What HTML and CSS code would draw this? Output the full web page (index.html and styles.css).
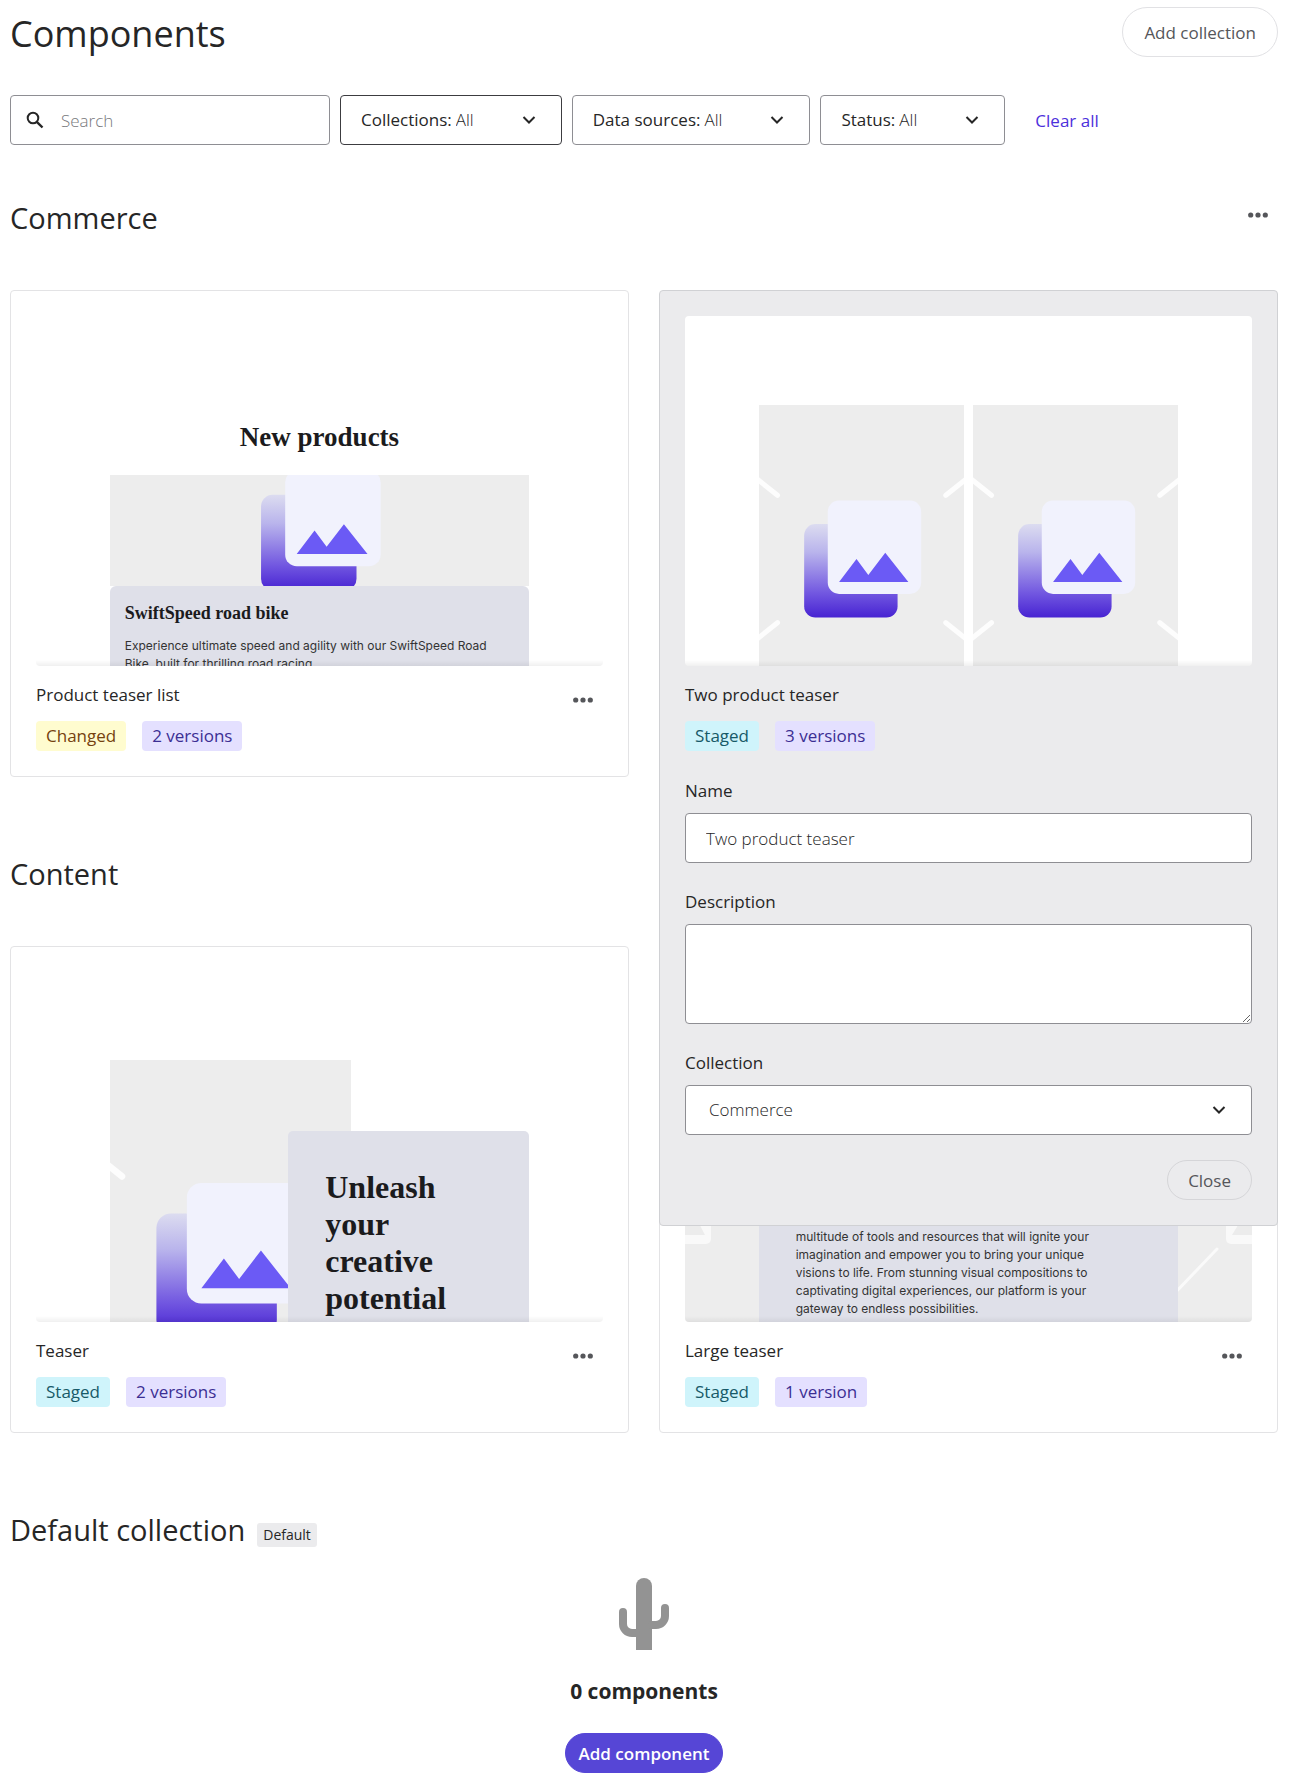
FILE: index.html
```html
<!DOCTYPE html>
<html lang="en">
<head>
<meta charset="utf-8">
<meta name="viewport" content="width=device-width, initial-scale=1">
<title>Components</title>
<link rel="stylesheet" href="styles.css">
</head>
<body>
<svg class="defs" width="0" height="0" aria-hidden="true">
  <defs>
    <linearGradient id="fade" x1="0" y1="0" x2="0" y2="1">
      <stop offset="0" stop-color="#dcdcf0"/>
      <stop offset="0.3" stop-color="#b9b4ec"/>
      <stop offset="0.75" stop-color="#7055e0"/>
      <stop offset="1" stop-color="#4723d2"/>
    </linearGradient>
    <symbol id="picture" viewBox="0 0 400 300" preserveAspectRatio="xMidYMid slice">
      <rect width="400" height="300" fill="#ededed"/>
      <g stroke="#fff" stroke-opacity="0.85" stroke-width="5" stroke-linecap="round">
        <path d="M118 88 98 72M282 88l20-16M118 212l-20 16M282 212l20 16"/>
      </g>
      <rect x="144" y="116" width="91" height="91" rx="11" fill="url(#fade)"/>
      <rect x="167" y="93" width="91" height="91" rx="11" fill="#f1f2fd"/>
      <path d="M178 172.500 195 150l11.500 15.500L223 144l22.500 28.500z" fill="#6b5af5"/>
    </symbol>
    <symbol id="chevron" viewBox="0 0 14 10">
      <path d="M1.500 2 7 7.500 12.500 2" fill="none" stroke="#262626" stroke-width="2"/>
    </symbol>
    <symbol id="dots" viewBox="0 0 20 6">
      <g fill="#55565a"><circle cx="2.700" cy="3" r="2.600"/><circle cx="10" cy="3" r="2.600"/><circle cx="17.300" cy="3" r="2.600"/></g>
    </symbol>
  </defs>
</svg>

<main class="page">
  <header class="page-head">
    <h1 class="page-title">Components</h1>
    <button type="button" class="btn btn-large">Add collection</button>
  </header>

  <form class="filters">
    <label class="search">
      <svg class="search-icon" viewBox="0 0 18 18" width="18" height="18" aria-hidden="true"><circle cx="7" cy="7" r="5.300" fill="none" stroke="#262626" stroke-width="2"/><path d="m10.800 10.800 5.700 5.700" stroke="#262626" stroke-width="2.400"/></svg>
      <input class="search-input" type="search" placeholder="Search" aria-label="Search">
    </label>
    <label class="filter filter-active"><span>Collections:</span>
      <select class="filter-select"><option>All</option></select>
      <svg class="chevron" aria-hidden="true"><use href="#chevron"/></svg>
    </label>
    <label class="filter"><span>Data sources:</span>
      <select class="filter-select"><option>All</option></select>
      <svg class="chevron" aria-hidden="true"><use href="#chevron"/></svg>
    </label>
    <label class="filter"><span>Status:</span>
      <select class="filter-select"><option>All</option></select>
      <svg class="chevron" aria-hidden="true"><use href="#chevron"/></svg>
    </label>
    <a class="clear" href="#">Clear all</a>
  </form>

  <div class="collections">
    <section>
      <div class="section-head">
        <h2 class="section-title">Commerce</h2>
        <button type="button" class="menu" aria-label="Commerce actions"><svg class="dots"><use href="#dots"/></svg></button>
      </div>
      <div class="cards">
        <article class="card">
          <div class="preview">
            <div class="stage product-list">
              <p class="display product-list-title">New products</p>
              <svg class="banner" aria-hidden="true"><use href="#picture"/></svg>
              <div class="product">
                <p class="display product-name">SwiftSpeed road bike</p>
                <p class="copy">Experience ultimate speed and agility with our SwiftSpeed Road Bike, built for thrilling road racing.</p>
              </div>
            </div>
          </div>
          <div class="card-foot">
            <div class="card-info">
              <h3 class="card-title">Product teaser list</h3>
              <div class="badges"><span class="badge changed">Changed</span><span class="badge versions">2 versions</span></div>
            </div>
            <button type="button" class="menu" aria-label="Product teaser list actions"><svg class="dots"><use href="#dots"/></svg></button>
          </div>
        </article>

        <div class="slot">
          <article class="card card-open">
            <div class="preview">
              <div class="stage pair">
                <svg class="pair-picture" aria-hidden="true"><use href="#picture"/></svg>
                <svg class="pair-picture" aria-hidden="true"><use href="#picture"/></svg>
              </div>
            </div>
            <div class="card-foot">
              <div class="card-info">
                <h3 class="card-title">Two product teaser</h3>
                <div class="badges"><span class="badge staged">Staged</span><span class="badge versions">3 versions</span></div>
              </div>
            </div>
            <form class="details">
              <label class="label" for="name">Name</label>
              <input class="control" id="name" type="text" value="Two product teaser">
              <label class="label" for="description">Description</label>
              <textarea class="control control-tall" id="description"></textarea>
              <label class="label" for="collection">Collection</label>
              <div class="select-wrap">
                <select class="control control-select" id="collection"><option>Commerce</option></select>
                <svg class="chevron chevron-over" aria-hidden="true"><use href="#chevron"/></svg>
              </div>
              <button type="button" class="btn btn-close">Close</button>
            </form>
          </article>
        </div>
      </div>
    </section>

    <section>
      <div class="section-head">
        <h2 class="section-title">Content</h2>
      </div>
      <div class="cards">
        <article class="card">
          <div class="preview">
            <div class="stage teaser">
              <svg class="teaser-picture" aria-hidden="true"><use href="#picture"/></svg>
              <div class="teaser-box"><p class="display teaser-title">Unleash your creative potential</p></div>
            </div>
          </div>
          <div class="card-foot">
            <div class="card-info">
              <h3 class="card-title">Teaser</h3>
              <div class="badges"><span class="badge staged">Staged</span><span class="badge versions">2 versions</span></div>
            </div>
            <button type="button" class="menu" aria-label="Teaser actions"><svg class="dots"><use href="#dots"/></svg></button>
          </div>
        </article>

        <article class="card">
          <div class="preview large">
            <svg class="large-picture" viewBox="0 0 567 350" preserveAspectRatio="xMidYMax slice" aria-hidden="true">
              <rect width="567" height="350" fill="#ededed"/>
              <rect x="-60" y="190" width="86" height="82" rx="5" fill="#f9f9f9"/>
              <rect x="541" y="190" width="86" height="82" rx="5" fill="#f9f9f9"/>
              <path d="M-20 263 8 240l12 23zM547 263l14-23 26 23z" fill="#ececec"/>
              <path d="m488 323 44-46" stroke="#fafafa" stroke-width="3" stroke-linecap="round"/>
            </svg>
            <div class="stage large-box">
              <p class="copy">multitude of tools and resources that will ignite your imagination and empower you to bring your unique visions to life. From stunning visual compositions to captivating digital experiences, our platform is your gateway to endless possibilities.</p>
            </div>
          </div>
          <div class="card-foot">
            <div class="card-info">
              <h3 class="card-title">Large teaser</h3>
              <div class="badges"><span class="badge staged">Staged</span><span class="badge versions">1 version</span></div>
            </div>
            <button type="button" class="menu" aria-label="Large teaser actions"><svg class="dots"><use href="#dots"/></svg></button>
          </div>
        </article>
      </div>
    </section>

    <section>
      <div class="section-head">
        <h2 class="section-title">Default collection</h2>
        <span class="tag">Default</span>
      </div>
      <div class="empty">
        <svg width="50" height="72" viewBox="0 0 50 72" aria-hidden="true">
          <path d="M17 72V8a8 8 0 0 1 16 0v64z" fill="#939393"/>
          <path d="M17 55h-4a9 9 0 0 1-9-9V34M33 47h4a9 9 0 0 0 9-9V30" fill="none" stroke="#939393" stroke-width="8" stroke-linecap="round"/>
        </svg>
        <p class="empty-text">0 components</p>
        <button type="button" class="btn btn-primary">Add component</button>
      </div>
    </section>
  </div>
</main>
</body>
</html>
```
FILE: styles.css
```css
*, *::before, *::after { box-sizing: border-box; }

body {
  margin: 0;
  background: #fff;
  color: #262626;
  font-family: "Open Sans", "Noto Sans", sans-serif;
  font-size: 17px;
  line-height: 24px;
}

h1, h2, h3, p { margin: 0; font-weight: 500; }
button, input, select, textarea { font: inherit; color: inherit; }
.defs { position: absolute; }
.page { padding: 7px 17px 16px 10px; }

.page-head { display: flex; justify-content: space-between; align-items: center; }
.page-title { padding-top: 4px; font-size: 36px; line-height: 46px; }

.btn {
  height: 40px;
  padding: 2px 20px 0;
  border: 1px solid #e1e1e4;
  border-radius: 25px;
  background: transparent;
  color: #55565a;
  font-weight: 500;
}
.btn-large { height: 50px; padding: 2px 21px 0; }
.btn-close { align-self: flex-end; margin-top: 25px; border-color: #d5d5d8; }
.btn-primary { padding: 2px 13px 0; border-color: #5646d6; background: #5646d6; color: #fff; font-weight: 600; }

.filters { display: flex; flex-wrap: wrap; gap: 10px; margin-top: 38px; }
.search, .filter {
  display: flex;
  align-items: center;
  height: 50px;
  border: 1px solid #8e8e93;
  border-radius: 4px;
  background: #fff;
}
.search { gap: 17px; width: 320px; padding: 0 15px; }
.search-input { flex: 1; min-width: 0; padding: 2px 0 0; border: 0; outline: 0; background: none; font-weight: 300; }
.search-input::placeholder { color: #77787c; opacity: 1; }
.filter { padding: 0 25px 0 20px; font-weight: 500; }
.filter-active { border-color: #3c3c40; }
.filter-select { appearance: none; width: 66px; margin-left: 4px; padding: 0; border: 0; background: none; font-weight: 300; }
.chevron { width: 14px; height: 10px; }
.clear { align-self: center; margin-left: 20px; padding-top: 2px; color: #4c30dc; text-decoration: none; }

.collections { display: flex; flex-direction: column; gap: 77px; margin-top: 53px; }
.section-head { display: flex; align-items: flex-start; }
.section-title { font-size: 29px; line-height: 40px; }
.section-head .menu { margin-left: auto; }
.menu { display: grid; place-items: center; width: 40px; height: 34px; padding: 0; border: 0; background: none; }
.dots { width: 20px; height: 6px; }
.tag { margin: 13px 0 0 12px; padding: 0 6px; border-radius: 3px; background: #ebebed; font-size: 14px; }

.cards { display: grid; grid-template-columns: 1fr 1fr; gap: 30px; margin-top: 52px; }
.card { padding: 25px; border: 1px solid #e3e3e5; border-radius: 4px; background: #fff; }
.slot { position: relative; }
.card-open { position: absolute; top: 0; left: 0; right: 0; z-index: 1; border-color: #d0d1d4; background: #ebebed; }
.card-foot { display: flex; justify-content: space-between; margin-top: 17px; }
.card-title { font-size: 17px; }
.badges { display: flex; gap: 16px; margin-top: 14px; }
.badge { padding: 3px 10px; border-radius: 4px; font-weight: 500; }
.changed { background: #fffccf; color: #75420f; }
.versions { background: #e4e0ff; color: #3b2e93; }
.staged { background: #cff4fb; color: #175a68; }

.preview { position: relative; height: 350px; overflow: hidden; border-radius: 4px; background: #fff; }
.preview::after {
  content: "";
  position: absolute;
  inset: auto 0 0;
  height: 6px;
  background: linear-gradient(rgba(0, 0, 0, 0), rgba(0, 0, 0, 0.06));
}
.stage { margin: 0 13%; }
.display { font-family: "Liberation Serif", serif; font-weight: 700; color: #1b1b1d; }
.copy { font-family: Inter, sans-serif; font-size: 12px; line-height: 18px; font-weight: 400; color: #333; }

.product-list { padding-top: 105px; }
.product-list-title { margin-bottom: 22px; font-size: 27px; line-height: 32px; text-align: center; }
.banner { display: block; width: 100%; height: 111px; }
.product { padding: 15px; border-radius: 6px; background: #dfe0e9; }
.product-name { margin-bottom: 12px; font-size: 18px; }

.pair { display: grid; grid-template-columns: 1fr 1fr; gap: 9px; padding-top: 89px; }
.pair-picture { width: 100%; height: 308px; }

.teaser { display: grid; grid-template-columns: 20fr 7fr 20fr; padding-top: 88px; }
.teaser-picture { grid-area: 1 / 1 / 2 / 3; width: 100%; height: 397px; }
.teaser-box { grid-area: 1 / 2 / 2 / 4; margin-top: 71px; padding: 38px 37px; border-radius: 5px; background: #dfe0e9; }
.teaser-title { font-size: 32px; line-height: 37px; }

.large { display: flex; }
.large-picture { position: absolute; inset: 0; width: 100%; height: 100%; }
.large-box { position: relative; flex: 1; display: flex; align-items: flex-end; padding: 0 37px 4px; background: #dfe0e9; }
.large-box .copy { max-width: 320px; }

.details { display: flex; flex-direction: column; padding-top: 1px; }
.label { margin: 27px 0 10px; font-weight: 500; }
.control {
  width: 100%;
  height: 50px;
  padding: 0 20px;
  border: 1px solid #8e8e93;
  border-radius: 4px;
  background: #fff;
  font-weight: 300;
}
.control-tall { height: 100px; padding: 12px 20px; resize: vertical; }
.control-select { appearance: none; padding: 0 23px; }
.select-wrap { position: relative; display: flex; }
.chevron-over { position: absolute; top: 20px; right: 26px; pointer-events: none; }

.empty { display: flex; flex-direction: column; align-items: center; margin-top: 28px; }
.empty-text { margin: 26px 0 27px; font-size: 21px; line-height: 30px; font-weight: 700; }
```
